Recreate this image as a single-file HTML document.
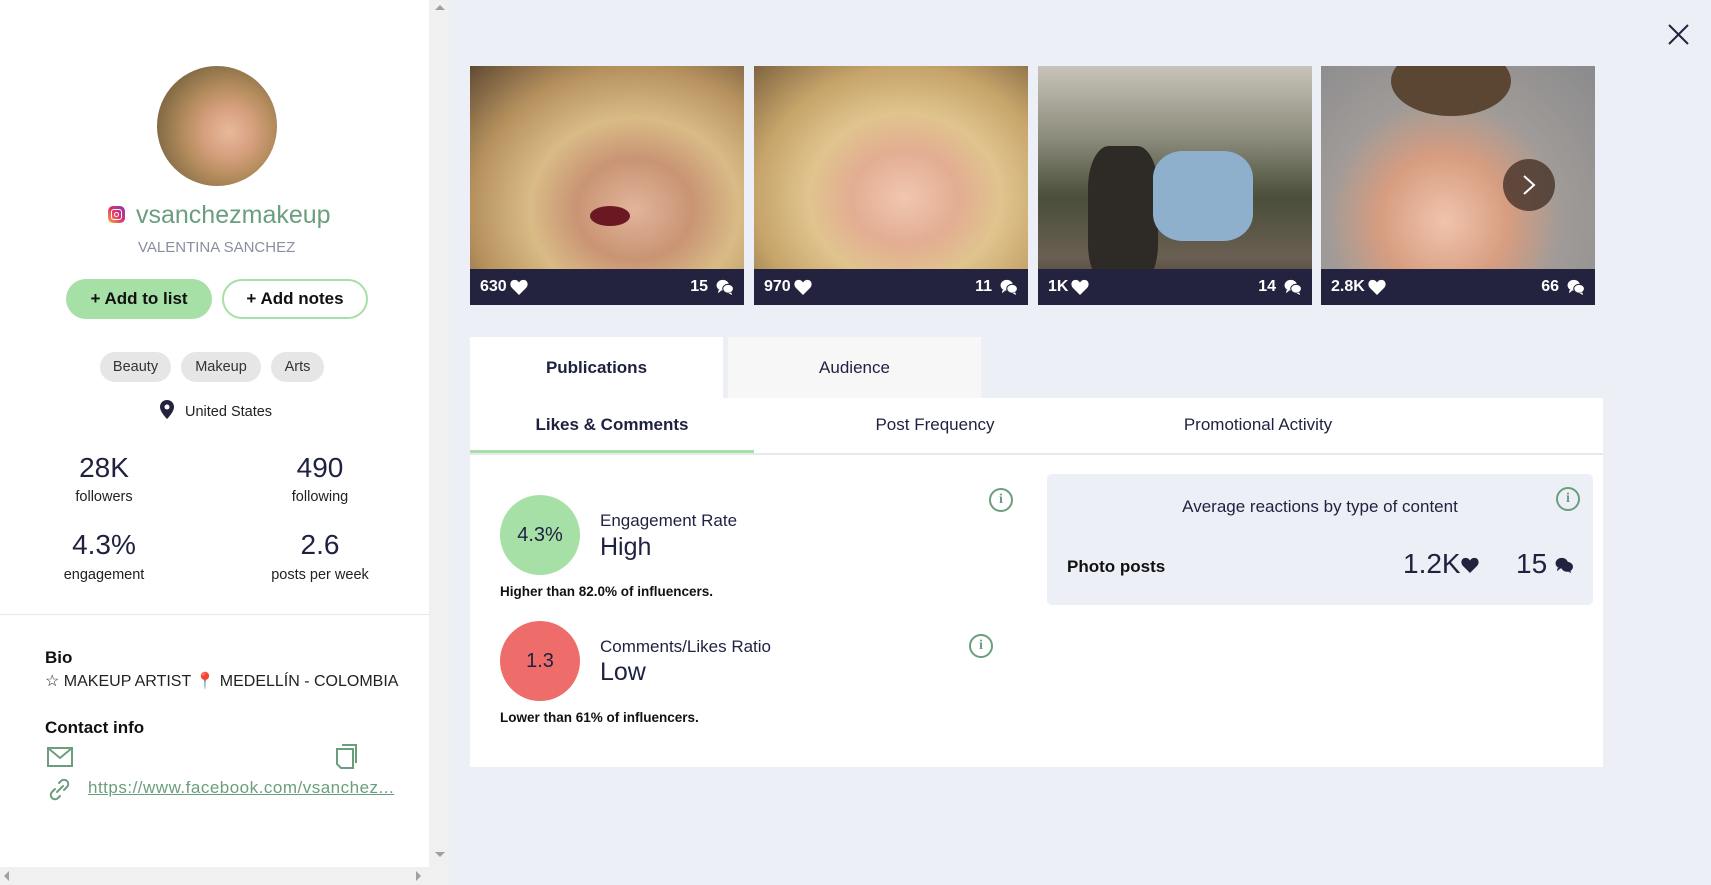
<!DOCTYPE html>
<html><head><meta charset="utf-8"><style>
*{margin:0;padding:0;box-sizing:border-box}
body{width:1711px;height:885px;overflow:hidden;background:#eceff6;font-family:"Liberation Sans",sans-serif;position:relative;color:#1f2140}
.a{position:absolute}
.left{left:0;top:0;width:429px;height:867px;background:#fff}
.vs{left:429px;top:0;width:21px;height:885px;background:#f0f0f0}
.hs{left:0;top:867px;width:429px;height:18px;background:#f0f0f0}
.btn{height:40px;border-radius:20px;font-weight:bold;font-size:17px;display:flex;align-items:center;justify-content:center;color:#111}
.tag{height:30px;border-radius:15px;background:#e6e6e6;font-size:14.5px;display:flex;align-items:center;justify-content:center;color:#333}
.num{font-size:28px;text-align:center;width:200px;color:#1f2140}
.lbl{font-size:14.5px;text-align:center;width:200px;color:#222}
.ph{top:66px;width:274px;height:239px;overflow:hidden}
.bar{left:0;bottom:0;width:100%;height:36px;background:#23233f;color:#fff;font-weight:bold;font-size:16px}
.bar .l{left:10px;top:9px;display:flex;align-items:center;gap:3px}.bar .r{right:10px;top:9px;display:flex;align-items:center;gap:8px}
.info{width:24px;height:24px;border:2px solid #6a9e7c;border-radius:50%;color:#6a9e7c;font-size:14px;font-weight:bold;text-align:center;line-height:20px;font-family:"Liberation Serif",serif}
</style></head><body>
<svg width="0" height="0" style="position:absolute"><defs>
<symbol id="h" viewBox="0 0 20 18"><path d="M10 18L2 10C-1 7 0 1 5 1c2 0 4 1 5 3 1-2 3-3 5-3 5 0 6 6 3 9z"/></symbol>
<symbol id="c" viewBox="0 0 20 18"><ellipse cx="7.5" cy="7" rx="7" ry="6"/><path d="M3 12l-1 4 4-3z"/><ellipse cx="13.5" cy="11" rx="6" ry="5" stroke="#23233f" stroke-width="1.2"/><path d="M17 15l1 3-4-2z"/></symbol>
</defs></svg>
<div class="a left"></div>
<div class="a vs"><div class="a" style="left:6px;top:5px;width:0;height:0;border-left:5px solid transparent;border-right:5px solid transparent;border-bottom:5px solid #a0a0a0"></div><div class="a" style="left:6px;top:852px;width:0;height:0;border-left:5px solid transparent;border-right:5px solid transparent;border-top:5px solid #a0a0a0"></div></div>
<div class="a hs"><div class="a" style="left:4px;top:4px;border-top:5px solid transparent;border-bottom:5px solid transparent;border-right:5px solid #a0a0a0"></div><div class="a" style="left:416px;top:4px;border-top:5px solid transparent;border-bottom:5px solid transparent;border-left:5px solid #a0a0a0"></div></div>

<div class="a" style="left:157px;top:66px;width:120px;height:120px;border-radius:50%;background:radial-gradient(circle at 60% 55%,#e8b89c 0,#d7a07f 25%,#b78e5f 45%,#8a7048 70%,#5b4a34 100%)"></div>
<div class="a" style="left:108px;top:206px;width:17px;height:17px;border-radius:5px;background:linear-gradient(45deg,#f9b233,#e1306c 50%,#833ab4)"><div class="a" style="left:3px;top:3px;width:11px;height:11px;border:1.5px solid #fff;border-radius:3px"></div><div class="a" style="left:6px;top:6px;width:5px;height:5px;border:1.5px solid #fff;border-radius:50%"></div></div>
<div class="a" style="left:136px;top:201px;font-size:25px;color:#6a9e7c">vsanchezmakeup</div>
<div class="a" style="left:138px;top:239px;font-size:15px;color:#8a8fa0">VALENTINA SANCHEZ</div>
<div class="a btn" style="left:66px;top:279px;width:146px;background:#a6e0a6">+ Add to list</div>
<div class="a btn" style="left:222px;top:279px;width:146px;border:2px solid #a6e0a6;background:#fff">+ Add notes</div>
<div class="a tag" style="left:100px;top:352px;width:71px">Beauty</div>
<div class="a tag" style="left:181px;top:352px;width:80px">Makeup</div>
<div class="a tag" style="left:271px;top:352px;width:53px">Arts</div>
<svg class="a" style="left:160px;top:400px" width="14" height="19" viewBox="0 0 14 19"><path d="M7 0C3 0 0 3 0 7c0 5 7 12 7 12s7-7 7-12c0-4-3-7-7-7z" fill="#23233f"/><circle cx="7" cy="7" r="2.5" fill="#fff"/></svg>
<div class="a" style="left:185px;top:404px;font-size:14.5px;color:#222">United States</div>
<div class="a num" style="left:4px;top:452px">28K</div><div class="a lbl" style="left:4px;top:489px">followers</div>
<div class="a num" style="left:220px;top:452px">490</div><div class="a lbl" style="left:220px;top:489px">following</div>
<div class="a num" style="left:4px;top:529px">4.3%</div><div class="a lbl" style="left:4px;top:567px">engagement</div>
<div class="a num" style="left:220px;top:529px">2.6</div><div class="a lbl" style="left:220px;top:567px">posts per week</div>
<div class="a" style="left:0;top:614px;width:429px;height:1px;background:#e8e8e8"></div>
<div class="a" style="left:45px;top:648px;font-size:17px;font-weight:bold;color:#111">Bio</div>
<div class="a" style="left:45px;top:671px;font-size:16px;color:#222;white-space:nowrap">☆ MAKEUP ARTIST <span style="color:#e33e8c">📍</span> MEDELLÍN - COLOMBIA</div>
<div class="a" style="left:45px;top:718px;font-size:17px;font-weight:bold;color:#111">Contact info</div>
<svg class="a" style="left:47px;top:747px" width="26" height="20" viewBox="0 0 26 20"><rect x="1" y="1" width="24" height="18" fill="none" stroke="#6a9e7c" stroke-width="2"/><path d="M1 1l12 10L25 1" fill="none" stroke="#6a9e7c" stroke-width="2"/></svg>
<svg class="a" style="left:336px;top:744px" width="22" height="25" viewBox="0 0 22 25"><path d="M6 1h14v18" fill="none" stroke="#6a9e7c" stroke-width="2"/><path d="M5 5h12v19H5l-4-4V5z" fill="none" stroke="#6a9e7c" stroke-width="2"/></svg>
<svg class="a" style="left:48px;top:778px" width="23" height="23" viewBox="0 0 23 23"><path d="M9 14l6-6M11 5l2-2a4 4 0 016 6l-3 3M12 18l-2 2a4 4 0 01-6-6l3-3" fill="none" stroke="#6a9e7c" stroke-width="2" stroke-linecap="round"/></svg>
<div class="a" style="left:88px;top:778px;font-size:17px;letter-spacing:.5px;color:#6a9e7c;text-decoration:underline">https://www.facebook.com/vsanchez...</div>

<div class="a ph" style="left:470px;background:radial-gradient(ellipse at 60% 60%,#e2b49a 0,#c99474 25%,#d9bb86 45%,#b6915e 70%,#5e4a33 100%)"><div class="a" style="left:120px;top:140px;width:40px;height:20px;border-radius:50%;background:#6a1822"></div><div class="a bar"><span class="a l">630 <svg width="18" height="16" fill="#fff"><use href="#h"/></svg></span><span class="a r">15 <svg width="18" height="16" fill="#fff"><use href="#c"/></svg></span></div></div>
<div class="a ph" style="left:754px;background:radial-gradient(ellipse at 55% 55%,#f0c7b0 0,#e3ad92 25%,#e0c48e 45%,#c6a46a 70%,#7e6440 100%)"><div class="a bar"><span class="a l">970 <svg width="18" height="16" fill="#fff"><use href="#h"/></svg></span><span class="a r">11 <svg width="18" height="16" fill="#fff"><use href="#c"/></svg></span></div></div>
<div class="a ph" style="left:1038px;background:linear-gradient(180deg,#c8c3ba 0,#8c8c7c 30%,#4a4e3a 55%,#6a5f52 80%,#3a2f2a 100%)"><div class="a" style="left:50px;top:80px;width:70px;height:140px;background:#2e2a26;border-radius:30%"></div><div class="a" style="left:115px;top:85px;width:100px;height:90px;background:#8fb0cc;border-radius:30%"></div><div class="a bar"><span class="a l">1K <svg width="18" height="16" fill="#fff"><use href="#h"/></svg></span><span class="a r">14 <svg width="18" height="16" fill="#fff"><use href="#c"/></svg></span></div></div>
<div class="a ph" style="left:1321px;background:radial-gradient(ellipse at 45% 65%,#f0c4ad 0,#d79d80 30%,#a09b98 55%,#8a8a8c 100%)"><div class="a" style="left:70px;top:-20px;width:120px;height:70px;border-radius:50%;background:#5a4632"></div><div class="a bar"><span class="a l">2.8K <svg width="18" height="16" fill="#fff"><use href="#h"/></svg></span><span class="a r">66 <svg width="18" height="16" fill="#fff"><use href="#c"/></svg></span></div></div>
<div class="a" style="left:1503px;top:159px;width:52px;height:52px;border-radius:50%;background:rgba(70,50,40,.8)"><svg class="a" style="left:18px;top:15px" width="16" height="22" viewBox="0 0 16 22"><path d="M3 2l10 9-10 9" fill="none" stroke="#fff" stroke-width="2"/></svg></div>
<svg class="a" style="left:1668px;top:24px" width="21" height="21" viewBox="0 0 21 21"><path d="M1 1l19 19M20 1L1 20" stroke="#23233f" stroke-width="2"/></svg>

<div class="a" style="left:470px;top:337px;width:253px;height:61px;background:#fff;font-weight:bold;font-size:17px;display:flex;align-items:center;justify-content:center">Publications</div>
<div class="a" style="left:728px;top:337px;width:253px;height:61px;background:#f7f7f7;font-size:17px;display:flex;align-items:center;justify-content:center">Audience</div>
<div class="a" style="left:470px;top:398px;width:1133px;height:369px;background:#fff"></div>
<div class="a" style="left:470px;top:453px;width:1133px;height:2px;background:#e8e9ee"></div>
<div class="a" style="left:470px;top:450px;width:284px;height:3px;background:#a6e0a6"></div>
<div class="a" style="left:470px;top:415px;width:284px;text-align:center;font-weight:bold;font-size:17px">Likes &amp; Comments</div>
<div class="a" style="left:780px;top:415px;width:310px;text-align:center;font-size:17px">Post Frequency</div>
<div class="a" style="left:1100px;top:415px;width:316px;text-align:center;font-size:17px">Promotional Activity</div>

<div class="a" style="left:500px;top:495px;width:80px;height:80px;border-radius:50%;background:#a6e0a6;display:flex;align-items:center;justify-content:center;font-size:20px">4.3%</div>
<div class="a" style="left:600px;top:511px;font-size:17px">Engagement Rate</div>
<div class="a" style="left:600px;top:533px;font-size:25px">High</div>
<div class="a" style="left:500px;top:584px;font-size:13.5px;font-weight:bold;color:#111">Higher than 82.0% of influencers.</div>
<div class="a info" style="left:989px;top:488px">i</div>
<div class="a" style="left:500px;top:621px;width:80px;height:80px;border-radius:50%;background:#ee6c69;display:flex;align-items:center;justify-content:center;font-size:20px">1.3</div>
<div class="a" style="left:600px;top:637px;font-size:17px">Comments/Likes Ratio</div>
<div class="a" style="left:600px;top:658px;font-size:25px">Low</div>
<div class="a" style="left:500px;top:710px;font-size:13.5px;font-weight:bold;color:#111">Lower than 61% of influencers.</div>
<div class="a info" style="left:969px;top:634px">i</div>

<div class="a" style="left:1047px;top:474px;width:546px;height:131px;background:#eceff6;border-radius:5px"></div>
<div class="a" style="left:1047px;top:497px;width:546px;text-align:center;font-size:17px">Average reactions by type of content</div>
<div class="a info" style="left:1556px;top:487px">i</div>
<div class="a" style="left:1067px;top:557px;font-size:17px;font-weight:bold;color:#111">Photo posts</div>
<div class="a" style="left:1403px;top:548px;font-size:28px">1.2K<svg width="18" height="16" fill="#23233f"><use href="#h"/></svg></div>
<div class="a" style="left:1516px;top:548px;font-size:28px">15 <svg width="18" height="16" fill="#23233f"><use href="#c"/></svg></div>
</body></html>
